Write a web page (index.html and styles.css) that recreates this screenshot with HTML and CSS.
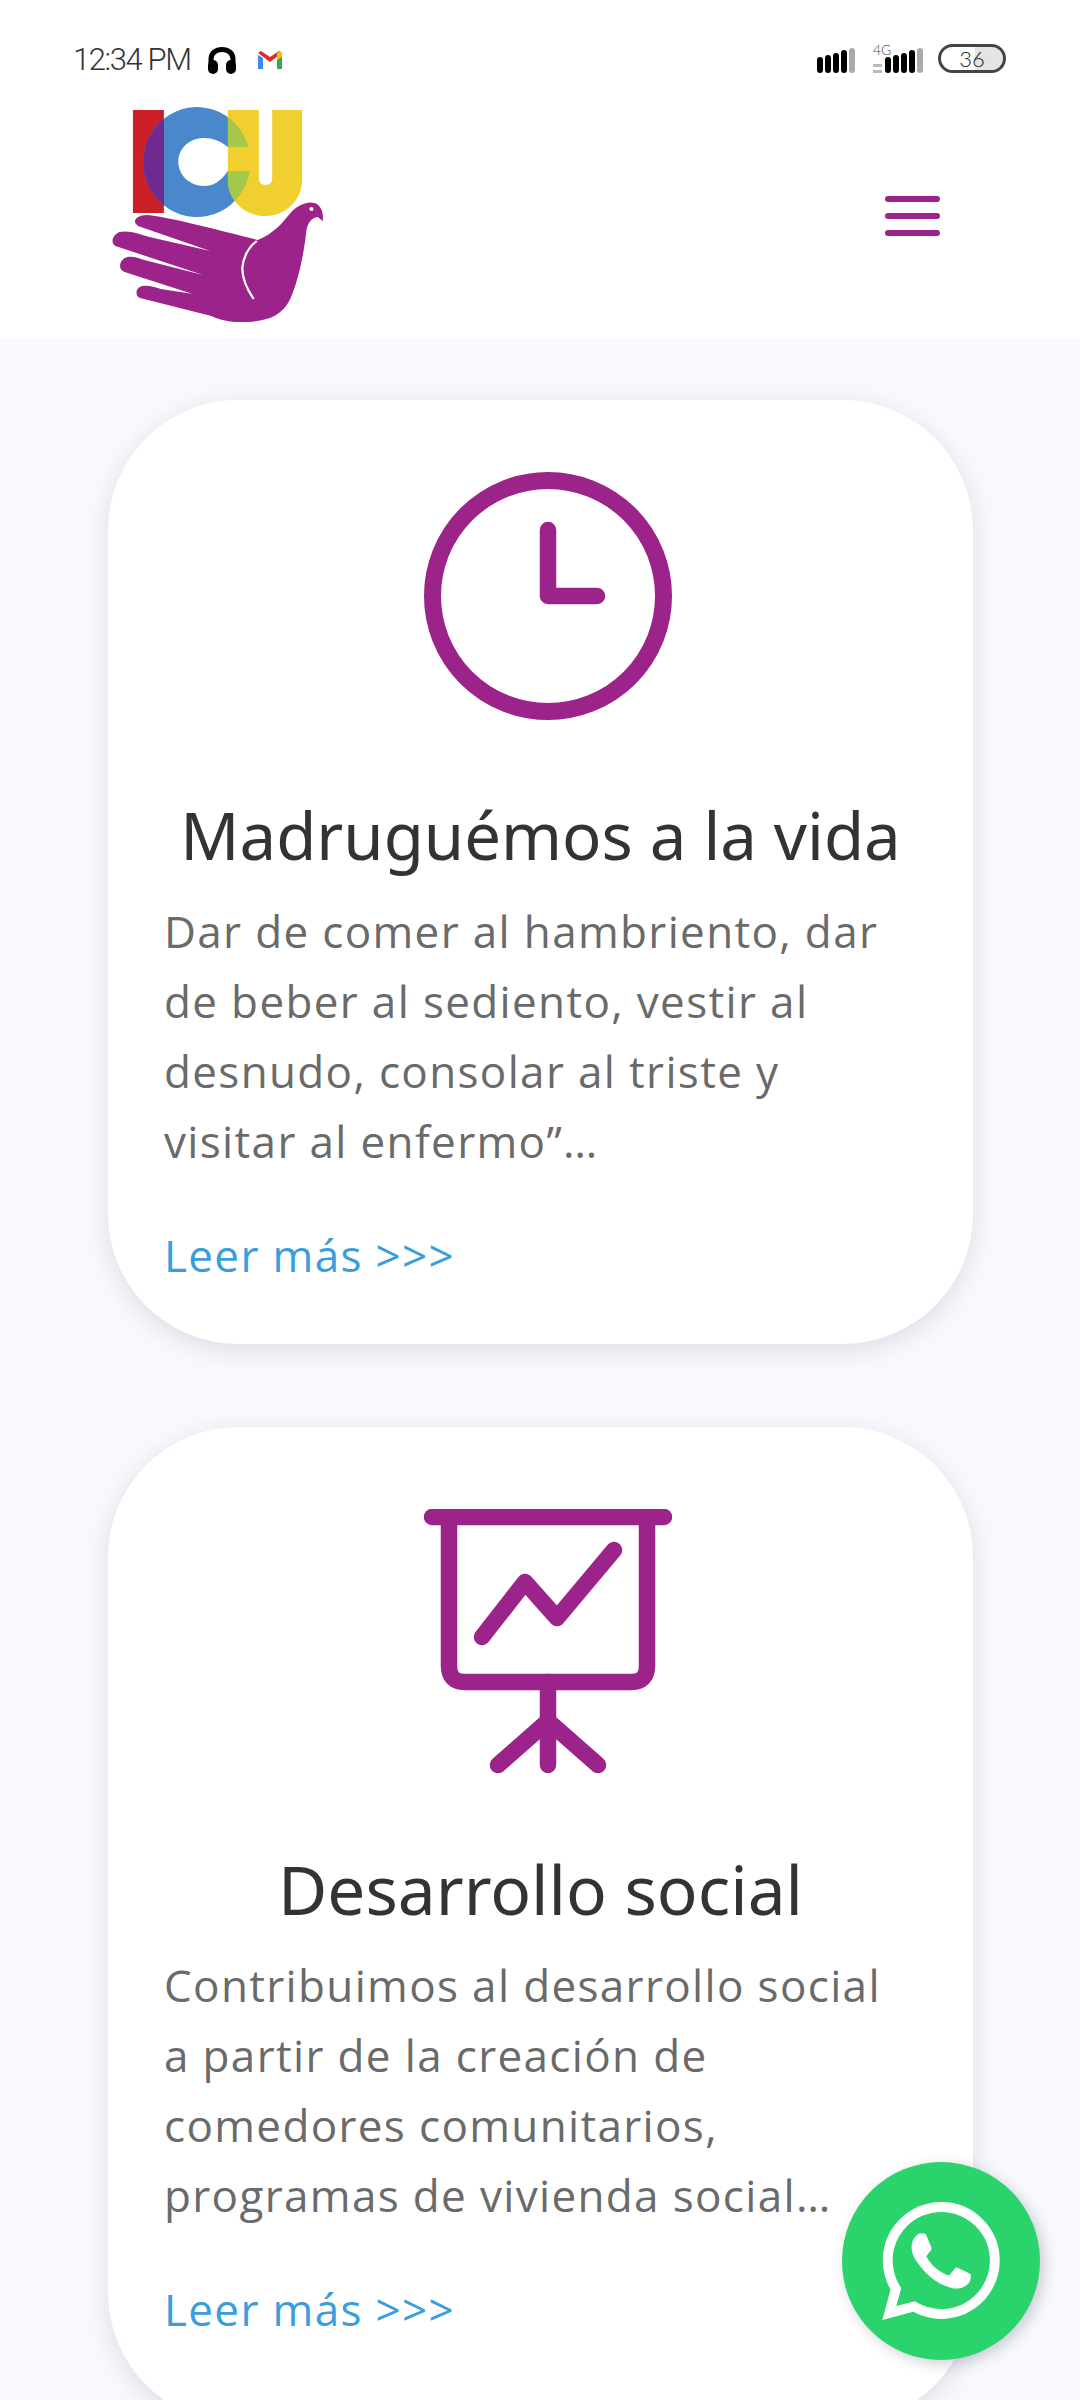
FILE: index.html
```html
<!DOCTYPE html>
<html>
<head>
    <title>ICU</title>
    <meta charset="utf-8">

    <link rel="stylesheet" href="styles.css">

</head>
<body>
<header class="top">
    <div class="status">
        <div class="status-left">
            <span class="time">12:34 PM</span>
            <svg class="ic-phones" viewBox="0 0 30 28" width="30" height="28">
                <path d="M4 17V13C4 7 9 3.500 15 3.500s11 3.500 11 9.500v4" fill="none" stroke="#000" stroke-width="5"/>
                <rect x="1" y="14" width="10" height="14" rx="5"/>
                <rect x="19" y="14" width="10" height="14" rx="5"/>
            </svg>
            <svg class="ic-gmail" viewBox="0 0 24 18" width="24" height="18">
                <path d="M0 4V18H5V7Z" fill="#4285f4"/>
                <path d="M19 7V18H24V4Z" fill="#34a853"/>
                <path d="M0 2 12 11 24 2 21 0 12 6 3 0Z" fill="#d93025"/>
                <path d="M19 2 22 0 24 2V6L19 9Z" fill="#fbbc04"/>
            </svg>
        </div>
        <div class="status-right">
            <div class="bars">
                <i></i><i></i><i></i><i></i><i class="off"></i>
            </div>
            <div class="net">
                <div class="net-label">
                    <span class="net-4g">4G</span>
                    <b></b><b></b>
                </div>
                <div class="bars">
                    <i></i><i></i><i></i><i></i><i class="off"></i>
                </div>
            </div>
            <div class="battery"><span>36</span></div>
        </div>
    </div>
    <nav class="nav">
        <svg class="logo" viewBox="100 100 220 230" width="227" height="230" preserveAspectRatio="none">
            <defs>
                <path id="c-shape" d="M241 147A52 55 0 1 0 242.300 171H221C214 182 206 186 198 186C184 186 173 175 173 162C173 148 184 138 198 138C206 138 214 141 221 147Z"/>
                <path id="u-shape" d="M221 110H251V178Q251 185 257.500 185T264 178V110H293V180C293 200 277 216 257 216S221 200 221 180Z"/>
                <clipPath id="clip-i"><rect x="129" y="110" width="30" height="103"/></clipPath>
                <clipPath id="clip-u"><use href="#u-shape"/></clipPath>
            </defs>
            <rect x="129" y="110" width="30" height="103" fill="#cb2027"/>
            <use href="#c-shape" fill="#4b88cb"/>
            <use href="#u-shape" fill="#f1cf2e"/>
            <use href="#c-shape" fill="#6e2a91" clip-path="url(#clip-i)"/>
            <use href="#c-shape" fill="#a3c84a" clip-path="url(#clip-u)"/>
            <path d="M250 240C268 232 274 222 281 214C288 205 298 201 305 203C311 205 314 212 313 221L308 217C302 218 298 223 297 232C295 250 290 280 281 300C272 318 256 322 233 322C222 322 214 320 205 316L136 298C131 296 131 288 138 286C144 285 150 287 156 289L194 295L193 296L121 272C115 270 115 262 121 258C127 255 134 258 140 260L197 275L112 246C107 243 109 235 116 232C125 230 135 234 145 237L204 251L134 226C128 222 131 215 143 215C165 217 215 231 250 240Z" fill="#9c2389"/>
            <path d="M249 241C240 248 236 258 235 268C235 280 240 290 246 299" fill="none" stroke="#fff" stroke-width="2.200"/>
            <circle cx="302" cy="209" r="2" fill="#fff"/>
        </svg>
        <div class="burger"><i></i><i></i><i></i></div>
    </nav>
</header>

<main class="content">
    <section class="card">
        <svg class="icon" viewBox="0 0 248 248" width="248" height="248">
            <circle cx="124" cy="124" r="115.500" fill="none" stroke="#9c2389" stroke-width="17"/>
            <path d="M124 58V124H173" fill="none" stroke="#9c2389" stroke-width="16.500" stroke-linecap="round" stroke-linejoin="round"/>
        </svg>
        <h2>Madruguémos a la vida</h2>
        <p>Dar de comer al hambriento, dar de beber al sediento, vestir al desnudo, consolar al triste y visitar al enfermo”…</p>
        <a class="more" href="#">Leer más &gt;&gt;&gt;</a>
    </section>

    <section class="card card-chart">
        <svg class="icon" viewBox="0 0 248 264" width="248" height="264">
            <g fill="none" stroke="#9c2389" stroke-width="16.500" stroke-linecap="round" stroke-linejoin="round">
                <path d="M8 8H240"/>
                <path d="M25 8V157Q25 173 41 173H207Q223 173 223 157V8"/>
                <path d="M124 173V256M74 256 124 212 174 256"/>
                <path d="M58 128 101 73 133 109 190 41"/>
            </g>
        </svg>
        <h2>Desarrollo social</h2>
        <p>Contribuimos al desarrollo social a partir de la creación de comedores comunitarios, programas de vivienda social…</p>
        <a class="more" href="#">Leer más &gt;&gt;&gt;</a>
    </section>
</main>

<a class="whatsapp" href="#">
    <svg viewBox="0 0 24 24" width="118" height="118">
        <path fill="#fff" d="M17.472 14.382c-.297-.149-1.758-.867-2.03-.967-.273-.099-.471-.148-.67.15-.197.297-.767.966-.94 1.164-.173.199-.347.223-.644.075-.297-.15-1.255-.463-2.39-1.475-.883-.788-1.48-1.761-1.653-2.059-.173-.297-.018-.458.13-.606.134-.133.298-.347.446-.52.149-.174.198-.298.298-.497.099-.198.05-.371-.025-.52-.075-.149-.669-1.612-.916-2.207-.242-.579-.487-.5-.669-.51-.173-.008-.371-.01-.57-.01-.198 0-.52.074-.792.372-.272.297-1.04 1.016-1.04 2.479 0 1.462 1.065 2.875 1.213 3.074.149.198 2.096 3.2 5.077 4.487.709.306 1.262.489 1.694.625.712.227 1.36.195 1.871.118.571-.085 1.758-.719 2.006-1.413.248-.694.248-1.289.173-1.413-.074-.124-.272-.198-.57-.347m-5.421 7.403h-.004a9.87 9.87 0 01-5.031-1.378l-.361-.214-3.741.982.998-3.648-.235-.374a9.86 9.86 0 01-1.51-5.26c.001-5.45 4.436-9.884 9.888-9.884 2.64 0 5.122 1.03 6.988 2.898a9.825 9.825 0 012.893 6.994c-.003 5.45-4.437 9.884-9.885 9.884m8.413-18.297A11.815 11.815 0 0012.05 0C5.495 0 .16 5.335.157 11.892c0 2.096.547 4.142 1.588 5.945L.057 24l6.305-1.654a11.882 11.882 0 005.683 1.448h.005c6.554 0 11.89-5.335 11.893-11.893a11.821 11.821 0 00-3.48-8.413z"/>
    </svg>
</a>
</body>
</html>
```

FILE: styles.css
```css
html,body{
    padding: 0;
    margin: 0;
    height: 2400px;
    overflow: hidden;
    font-family: "Noto Sans", "Open Sans", sans-serif;
    background: #f8f8fd;
}

body{
    position: relative;
}

.top{
    height: 338px;
    background: #fff;
}

/* status bar */
.status{
    height: 100px;
    padding: 44px 74px 0 73px;
    box-sizing: border-box;
    display: flex;
    justify-content: space-between;
    align-items: flex-start;
}

.status-left{
    display: flex;
    align-items: center;
    height: 32px;
}

.time{
    font-family: Roboto, sans-serif;
    font-weight: 300;
    font-size: 31px;
    line-height: 32px;
    letter-spacing: -1.400px;
    white-space: nowrap;
    color: #333;
    width: 134px;
}

.ic-gmail{
    margin-left: 21px;
}

.status-right{
    display: flex;
    align-items: flex-end;
    height: 29px;
}

.bars{
    display: flex;
    align-items: flex-end;
    gap: 2px;
}

.bars i{
    display: block;
    width: 6px;
    height: 16px;
    border-radius: 3px;
    background: #000;
}

.bars i:nth-child(2){ height: 18px; }
.bars i:nth-child(3){ height: 20px; }
.bars i:nth-child(4){ height: 23px; }
.bars i:nth-child(5){ height: 25px; }

.bars i.off{
    background: #aaa;
}

.net{
    display: flex;
    align-items: flex-end;
    margin-left: 18px;
    gap: 3px;
}

.net-label{
    width: 9px;
    position: relative;
    display: flex;
    flex-direction: column;
    gap: 3px;
}

.net-label b{
    display: block;
    height: 3px;
    background: #bbb;
}

.net-4g{
    position: absolute;
    left: 0;
    bottom: 16px;
    font-family: Lato, sans-serif;
    font-weight: 300;
    font-size: 14px;
    line-height: 14px;
    color: #444;
}

.battery{
    width: 68px;
    height: 29px;
    margin-left: 15px;
    box-sizing: border-box;
    border: 3px solid #444;
    border-radius: 15px;
    background: linear-gradient(to right, #fff 55%, #e4e4e4 55%);
    background-clip: padding-box;
    text-align: center;
    font-family: Lato, sans-serif;
    font-weight: 300;
    font-size: 22px;
    line-height: 23px;
    color: #222;
}

/* logo row */
.nav{
    display: flex;
    justify-content: space-between;
    padding: 0 140px 0 103px;
    align-items: flex-start;
}

.burger{
    width: 55px;
    margin-top: 96px;
    display: flex;
    flex-direction: column;
    gap: 11px;
}

.burger i{
    display: block;
    height: 6px;
    border-radius: 3px;
    background: #9c2389;
}

/* cards */
.content{
    padding: 62px 107px 0 108px;
    display: flex;
    flex-direction: column;
    gap: 83px;
}

.card{
    background: #fff;
    border-radius: 130px;
    padding: 72px 56px 0;
    height: 944px;
    box-sizing: border-box;
    box-shadow: 0 6px 24px rgba(40, 40, 70, .13);
}

.card-chart{
    padding-top: 82px;
    height: 996px;
}

.icon{
    display: block;
    margin: 0 auto;
    position: relative;
    left: 7px;
}

h2{
    margin: 75px 0 0;
    text-align: center;
    font-weight: 400;
    font-size: 65.300px;
    line-height: 80px;
    color: #333;
}

.card-chart h2{
    font-size: 67.600px;
    margin-top: 76px;
}

.card p{
    margin: 21px 0 0;
    font-family: "Open Sans", sans-serif;
    font-size: 44px;
    line-height: 70px;
    letter-spacing: 1.350px;
    color: #6a6a6a;
}

.more{
    display: block;
    margin-top: 44px;
    font-family: "Open Sans", sans-serif;
    font-size: 44px;
    line-height: 70px;
    letter-spacing: 1.350px;
    color: #3a9ddc;
    text-decoration: none;
}

.whatsapp{
    position: absolute;
    left: 842px;
    top: 2162px;
    width: 198px;
    height: 198px;
    border-radius: 50%;
    background: #2ad36c;
    box-shadow: 4px 4px 14px rgba(40, 40, 70, .22);
    display: flex;
    align-items: center;
    justify-content: center;
}
```
